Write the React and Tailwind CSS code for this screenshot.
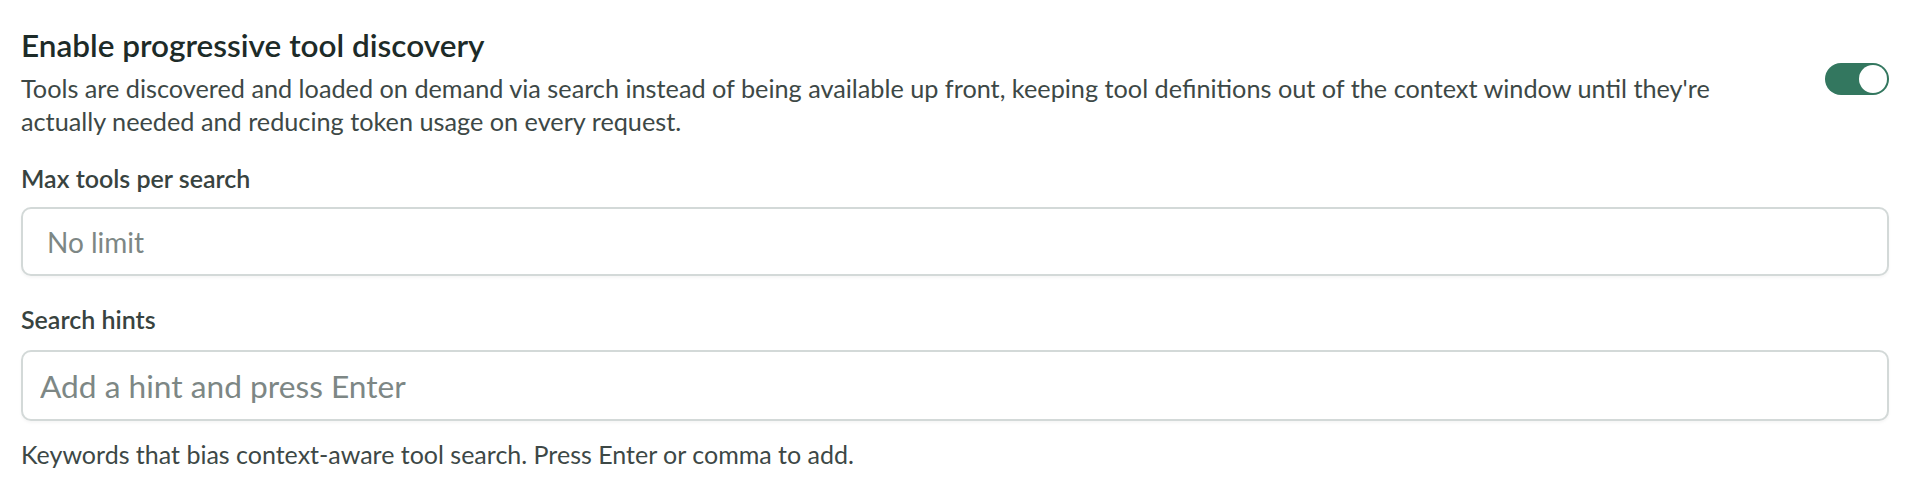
import React, { useState } from 'react';

function Toggle({ on, onChange }) {
    return (
        <button
            onClick={() => onChange(!on)}
            className={`relative mb-[8px] h-[32px] w-[64px] shrink-0 rounded-full transition-colors ${on ? 'bg-[#33775f]' : 'bg-[#cfd5d4]'}`}
        >
            <span
                className={`absolute top-[2px] h-[28px] w-[28px] rounded-full bg-white transition-all ${on ? 'left-[34px]' : 'left-[2px]'}`}
            />
        </button>
    );
}

export default function App() {
    const [enabled, setEnabled] = useState(true);
    const [hint, setHint] = useState('');

    return (
        <div className="min-h-[490px] w-full bg-white px-[21px] pt-[28px] font-['Lato',sans-serif]">
            <div className="flex items-center justify-between gap-10">
                <div className="flex-1 max-w-[1730px]">
                    <h2 className="text-[31.5px] leading-[34px] font-semibold text-[#1d2b28]">
                        Enable progressive tool discovery
                    </h2>
                    <p className="mt-[10px] text-[25.25px] leading-[33px] text-[#3d4846]">
                        Tools are discovered and loaded on demand via search instead of being available up front, keeping tool definitions out of the context window until they're actually needed and reducing token usage on every request.
                    </p>
                </div>
                <Toggle on={enabled} onChange={setEnabled} />
            </div>

            <label className="mt-[26px] block text-[25px] leading-[28px] font-semibold text-[#38433f]">
                Max tools per search
            </label>
            <input
                type="number"
                placeholder="No limit"
                className="mt-[15px] block h-[69px] w-full rounded-[10px] border-2 border-[#d3d9d8] bg-white px-[24px] text-[28px] text-[#1d2b28] shadow-[0_2px_3px_rgba(0,0,0,0.04)] outline-none placeholder:text-[#7d8785]"
            />

            <label className="mt-[29px] block text-[25px] leading-[28px] font-semibold text-[#38433f]">
                Search hints
            </label>
            <input
                type="text"
                value={hint}
                onChange={(e) => setHint(e.target.value)}
                placeholder="Add a hint and press Enter"
                className="mt-[17px] block h-[71px] w-full rounded-[10px] border-2 border-[#d3d9d8] bg-white px-[17px] text-[31.7px] text-[#1d2b28] shadow-[0_2px_3px_rgba(0,0,0,0.04)] outline-none placeholder:text-[#7d8785]"
            />
            <p className="mt-[19px] text-[25px] leading-[28px] text-[#3d4846]">
                Keywords that bias context-aware tool search. Press Enter or comma to add.
            </p>
        </div>
    );
}
